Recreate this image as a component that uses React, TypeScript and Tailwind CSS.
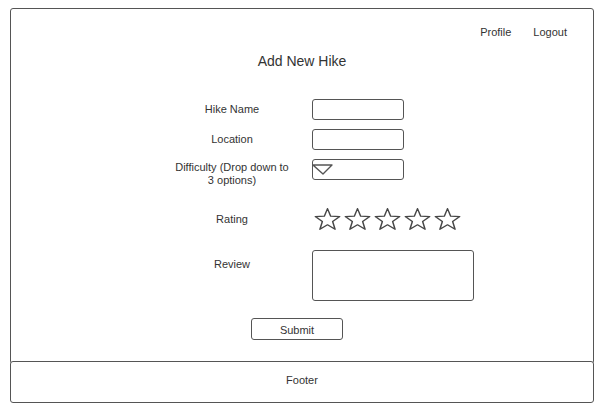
const Star = () => (
  <svg width="27" height="23" viewBox="-0.5 -0.5 26 25" preserveAspectRatio="none">
    <polygon
      points="12.5,0.2 15.56,8.39 24.29,8.77 17.45,14.21 19.79,22.63 12.5,17.8 5.21,22.63 7.55,14.21 0.71,8.77 9.44,8.39"
      fill="none"
      stroke="#474747"
      strokeWidth="1.4"
      strokeLinejoin="round"
    />
  </svg>
);

const Field = () => (
  <div className="h-[21px] w-[92px] rounded-[3px] border-[1.5px] border-[#555]" />
);

const App = () => {
  return (
    <div className="h-[412px] w-[604px] bg-white pt-[8px] font-['Liberation_Sans',Arial,sans-serif] text-[11px] leading-[13px] text-[#333]">
      <div className="mx-[10px] h-[356px] rounded-[3px] border-[1.5px] border-[#555]">
        <div className="flex justify-end gap-[22px] pr-[26px] pt-[17px]">
          <span>Profile</span>
          <span>Logout</span>
        </div>
        <h1 className="mt-[14px] text-center text-[14px] leading-[17px]">Add New Hike</h1>

        <div className="ml-[161px] mt-[29px] flex flex-col">
          <div className="flex items-center gap-[20px]">
            <span className="w-[120px] text-center">Hike Name</span>
            <Field />
          </div>
          <div className="mt-[9px] flex items-center gap-[20px]">
            <span className="w-[120px] text-center">Location</span>
            <Field />
          </div>
          <div className="mt-[9px] flex h-[29px] items-start gap-[20px]">
            <span className="w-[120px] pt-[2px] text-center">
              Difficulty (Drop down to
              <br />3 options)
            </span>
            <div className="h-[21px] w-[92px] rounded-[3px] border-[1.5px] border-[#555] pt-[4px]">
              <svg width="20" height="11" viewBox="0 0 20 11">
                <polyline points="0,1 19,1 10,10 0,1" fill="none" stroke="#555" strokeWidth="1.4" strokeLinejoin="round" />
              </svg>
            </div>
          </div>
          <div className="mt-[20px] flex items-center gap-[20px]">
            <span className="w-[120px] text-center">Rating</span>
            <div className="ml-[2px] flex gap-[3px]">
              <Star />
              <Star />
              <Star />
              <Star />
              <Star />
            </div>
          </div>
          <div className="mt-[19px] flex items-start gap-[20px]">
            <span className="w-[120px] pt-[8px] text-center">Review</span>
            <div className="h-[51px] w-[162px] rounded-[3px] border-[1.5px] border-[#555]" />
          </div>
        </div>

        <button className="ml-[240px] mt-[17px] flex h-[22px] w-[92px] items-center justify-center rounded-[3px] border-[1.5px] border-[#555] pt-[2px] text-[11px]">
          Submit
        </button>
      </div>
      <footer className="mx-[10px] -mt-[3px] flex h-[42px] items-center justify-center rounded-[3px] border-[1.5px] border-[#555] bg-white pb-[3px]">
        Footer
      </footer>
    </div>
  );
};

export default App;
